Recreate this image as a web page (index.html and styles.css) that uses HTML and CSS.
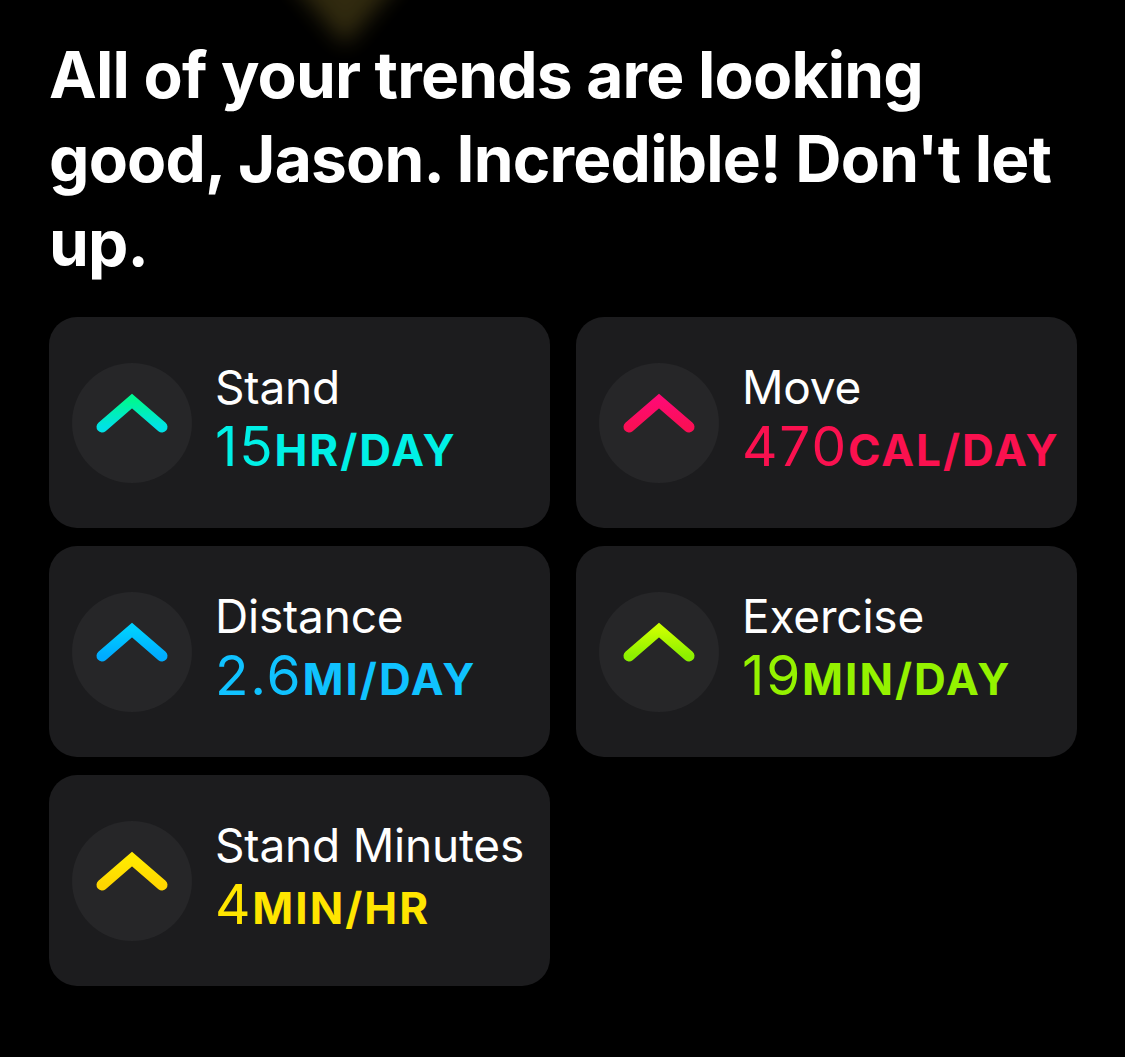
FILE: index.html
```html
<!DOCTYPE html>
<html lang="en">
<head>
<meta charset="utf-8">
<title>Trends</title>
<link rel="stylesheet" href="styles.css">
</head>
<body>
<div class="page">
  <div class="glow"><div class="glow-shape"></div></div>
  <h1 class="headline">All of your trends are looking good, Jason. Incredible! Don't let up.</h1>
  <div class="grid">
    <div class="card">
      <div class="badge">
        <svg viewBox="0 0 120 120" width="120" height="120">
          <defs><linearGradient id="g1" x1="0" y1="0" x2="0" y2="1"><stop offset="0" stop-color="#00F893"/><stop offset="1" stop-color="#00E2E6"/></linearGradient></defs>
          <polyline points="30,64 60,38 90,64" fill="none" stroke="url(#g1)" stroke-width="11" stroke-linecap="round" stroke-linejoin="miter"/>
        </svg>
      </div>
      <div class="info">
        <div class="label">Stand</div>
        <div class="value stand"><span class="num">15</span><span class="unit">HR/DAY</span></div>
      </div>
    </div>
    <div class="card">
      <div class="badge">
        <svg viewBox="0 0 120 120" width="120" height="120">
          <defs><linearGradient id="g2" x1="0" y1="0" x2="0" y2="1"><stop offset="0" stop-color="#FF0A73"/><stop offset="1" stop-color="#FA0F55"/></linearGradient></defs>
          <polyline points="30,64 60,38 90,64" fill="none" stroke="url(#g2)" stroke-width="11" stroke-linecap="round" stroke-linejoin="miter"/>
        </svg>
      </div>
      <div class="info">
        <div class="label">Move</div>
        <div class="value move"><span class="num">470</span><span class="unit">CAL/DAY</span></div>
      </div>
    </div>
    <div class="card">
      <div class="badge">
        <svg viewBox="0 0 120 120" width="120" height="120">
          <defs><linearGradient id="g3" x1="0" y1="0" x2="0" y2="1"><stop offset="0" stop-color="#00CFFF"/><stop offset="1" stop-color="#00ACFF"/></linearGradient></defs>
          <polyline points="30,64 60,38 90,64" fill="none" stroke="url(#g3)" stroke-width="11" stroke-linecap="round" stroke-linejoin="miter"/>
        </svg>
      </div>
      <div class="info">
        <div class="label">Distance</div>
        <div class="value distance"><span class="num">2.6</span><span class="unit">MI/DAY</span></div>
      </div>
    </div>
    <div class="card">
      <div class="badge">
        <svg viewBox="0 0 120 120" width="120" height="120">
          <defs><linearGradient id="g4" x1="0" y1="0" x2="0" y2="1"><stop offset="0" stop-color="#C8FF00"/><stop offset="1" stop-color="#8CF000"/></linearGradient></defs>
          <polyline points="30,64 60,38 90,64" fill="none" stroke="url(#g4)" stroke-width="11" stroke-linecap="round" stroke-linejoin="miter"/>
        </svg>
      </div>
      <div class="info">
        <div class="label">Exercise</div>
        <div class="value exercise"><span class="num">19</span><span class="unit">MIN/DAY</span></div>
      </div>
    </div>
    <div class="card">
      <div class="badge">
        <svg viewBox="0 0 120 120" width="120" height="120">
          <defs><linearGradient id="g5" x1="0" y1="0" x2="0" y2="1"><stop offset="0" stop-color="#FFEA00"/><stop offset="1" stop-color="#FFD600"/></linearGradient></defs>
          <polyline points="30,64 60,38 90,64" fill="none" stroke="url(#g5)" stroke-width="11" stroke-linecap="round" stroke-linejoin="miter"/>
        </svg>
      </div>
      <div class="info">
        <div class="label">Stand Minutes</div>
        <div class="value standmin"><span class="num">4</span><span class="unit">MIN/HR</span></div>
      </div>
    </div>
  </div>
</div>
</body>
</html>
```
FILE: styles.css
```css
html, body {
  margin: 0;
  padding: 0;
  background: #000;
}
body {
  font-family: Inter, "Noto Sans", "Liberation Sans", sans-serif;
  color: #fff;
}
.page {
  position: relative;
  width: 1125px;
  height: 1057px;
  overflow: hidden;
  box-sizing: border-box;
  padding: 33px 49px 0 49px;
}
.glow {
  position: absolute;
  left: 265px;
  top: -40px;
  width: 160px;
  height: 85px;
  filter: blur(11px);
  opacity: 0.85;
}
.glow-shape {
  width: 100%;
  height: 100%;
  background: #3a3212;
  clip-path: polygon(5% 0, 95% 0, 50% 100%);
}
.headline {
  position: relative;
  margin: 0;
  font-size: 64px;
  line-height: 84px;
  font-weight: 700;
  letter-spacing: -0.8px;
}
.grid {
  margin-top: 32px;
  display: grid;
  grid-template-columns: 501px 501px;
  grid-auto-rows: 211px;
  column-gap: 26px;
  row-gap: 18px;
}
.card {
  background: #1c1c1e;
  border-radius: 28px;
  display: flex;
  align-items: center;
  padding: 0 23px;
  gap: 23px;
}
.badge {
  width: 120px;
  height: 120px;
  border-radius: 50%;
  background: #262628;
  flex: none;
}
.badge svg {
  display: block;
}
.info {
  display: flex;
  flex-direction: column;
  margin-top: 4px;
}
.label {
  font-size: 46px;
  line-height: 56px;
  font-weight: 400;
  letter-spacing: -0.2px;
}
.value {
  line-height: 62px;
  white-space: nowrap;
}
.num {
  font-size: 55px;
  font-weight: 400;
  letter-spacing: 1.8px;
}
.unit {
  font-size: 44px;
  font-weight: 700;
  letter-spacing: 2px;
}
.stand { color: #00F0E6; }
.move { color: #FA114F; }
.distance { color: #10C2FF; }
.exercise { color: #94F200; }
.standmin { color: #FFE500; }
```
